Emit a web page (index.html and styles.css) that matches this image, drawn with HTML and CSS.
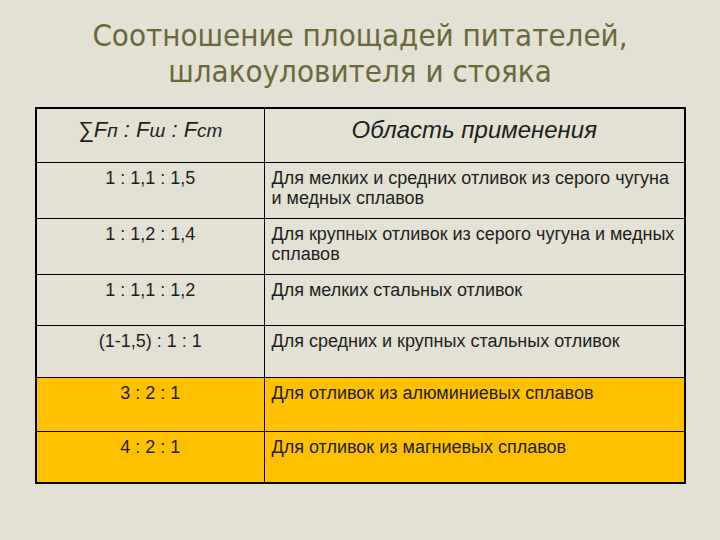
FILE: index.html
```html
<!DOCTYPE html>
<html lang="ru">
<head>
<meta charset="utf-8">
<title>Соотношение площадей</title>
<link rel="stylesheet" href="styles.css">
</head>
<body>
<div class="slide">
  <h1 class="title">Соотношение площадей питателей,<br>шлакоуловителя и стояка</h1>
  <table class="grid">
    <colgroup><col class="c1"><col class="c2"></colgroup>
    <tr class="head h54">
      <th>∑<i>F</i><i class="sm">п</i> : <i>F</i><i class="sm">ш</i> : <i>F</i><i class="sm">ст</i></th>
      <th>Область применения</th>
    </tr>
    <tr class="h56"><td class="ratio">1 : 1,1 : 1,5</td><td class="use">Для мелких и средних отливок из серого чугуна и медных сплавов</td></tr>
    <tr class="h56"><td class="ratio">1 : 1,2 : 1,4</td><td class="use">Для крупных отливок из серого чугуна и медных сплавов</td></tr>
    <tr class="h51"><td class="ratio">1 : 1,1 : 1,2</td><td class="use">Для мелких стальных отливок</td></tr>
    <tr class="h52"><td class="ratio">(1-1,5) : 1 : 1</td><td class="use">Для средних и крупных стальных отливок</td></tr>
    <tr class="hl h54"><td class="ratio">3 : 2 : 1</td><td class="use">Для отливок из алюминиевых сплавов</td></tr>
    <tr class="hl h52"><td class="ratio">4 : 2 : 1</td><td class="use">Для отливок из магниевых сплавов</td></tr>
  </table>
</div>
</body>
</html>
```
FILE: styles.css
```css
html, body {
  margin: 0;
  padding: 0;
  background: #e3e1d3;
}
.slide {
  width: 720px;
  height: 540px;
  padding-top: 17px;
  box-sizing: border-box;
}
.title {
  margin: 0;
  font-family: "DejaVu Sans Condensed", "DejaVu Sans", sans-serif;
  font-stretch: condensed;
  font-weight: normal;
  font-size: 31px;
  line-height: 36px;
  color: #6b693a;
  text-align: center;
}
.grid {
  margin: 18px 0 0 35px;
  width: 649px;
  border-collapse: collapse;
  border: 2px solid #000;
  font-family: "Liberation Sans", Arial, sans-serif;
  color: #1e1e1e;
  table-layout: fixed;
}
.c1 { width: 228px; }
.c2 { width: 421px; }
.grid th, .grid td {
  border: 1px solid #000;
  vertical-align: top;
  padding: 0;
}
.grid th {
  font-weight: normal;
  font-style: italic;
  font-size: 24px;
  line-height: 26px;
  padding-top: 8px;
  text-align: center;
}
.grid th.f, .grid th:first-child { font-size: 22px; }
.grid th i { font-style: italic; }
.grid th .sm { font-size: 19px; }
.grid td {
  font-size: 18px;
  line-height: 20px;
  padding-top: 5px;
}
.ratio {
  text-align: center;
}
.use {
  padding-left: 7px !important;
  padding-right: 2px !important;
}
.hl td { background: #ffc000; }
.h54 { height: 54px; }
.h56 { height: 56px; }
.h51 { height: 51px; }
.h52 { height: 52px; }
```
